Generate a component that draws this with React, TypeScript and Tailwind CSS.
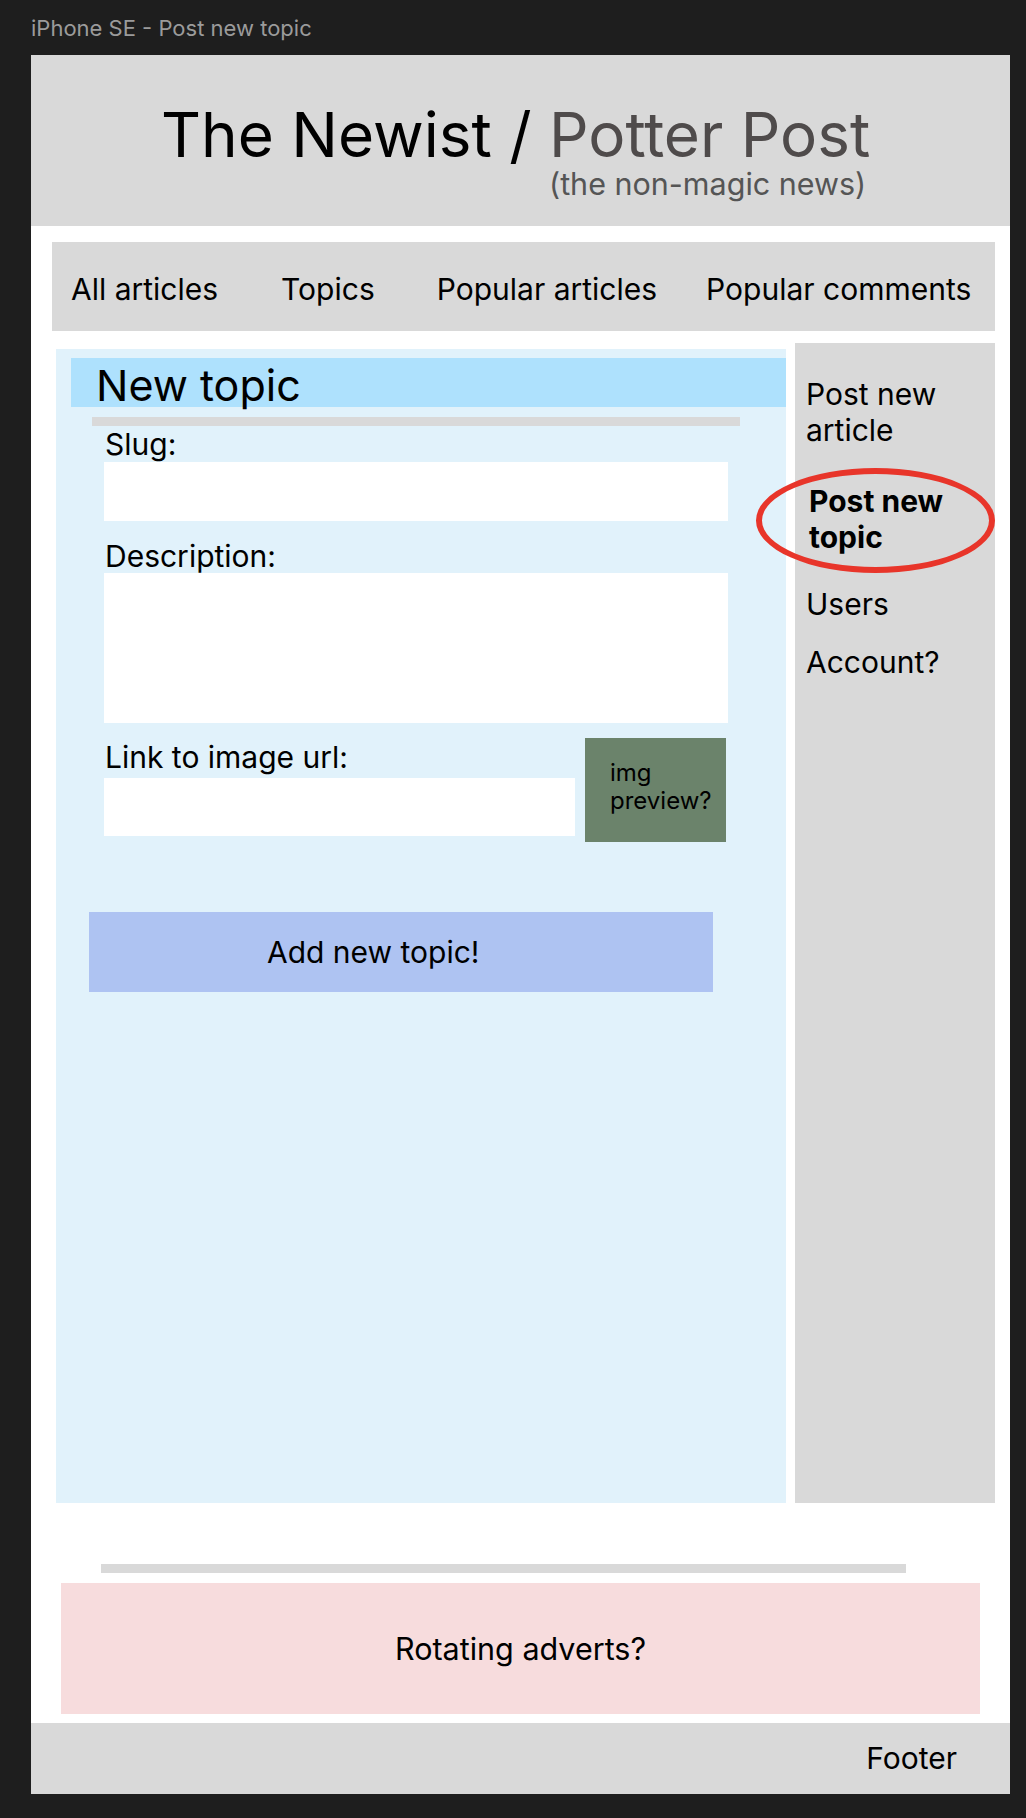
const navItems = [
  { label: "All articles", gap: "" },
  { label: "Topics", gap: "ml-[63px]" },
  { label: "Popular articles", gap: "ml-[62px]" },
  { label: "Popular comments", gap: "ml-[49px]" },
];

function Sidebar() {
  return (
    <aside className="relative w-[200px] bg-[#d9d9d9] pl-[11px] pt-[33px] text-[30px] leading-[36px] text-black">
      <div>
        Post new
        <br />
        article
      </div>
      <div className="mt-[35px] pl-[3px] font-bold">
        Post new
        <br />
        topic
      </div>
      <div className="mt-[31px]">Users</div>
      <div className="mt-[22px]">Account?</div>

      {/* red highlight ring */}
      <div className="absolute left-[-39px] top-[125px] h-[105px] w-[239px] rounded-[50%] border-[6px] border-[#e8352a]" />
    </aside>
  );
}

function TopicForm() {
  return (
    <section className="mt-[6px] w-[730px] bg-[#e1f2fb] pt-[9px]">
      {/* Title bar */}
      <div className="ml-[15px] flex h-[49px] items-center bg-[#aee1fd] pl-[25px] pt-[6px] text-[43px] leading-none text-black">
        New topic
      </div>
      <div className="ml-[36px] mt-[10px] h-[9px] w-[648px] bg-[#d9d9d9]" />

      <div className="pl-[48px] text-[30px] leading-none text-black">
        <div className="mt-[3px] pl-[1px]">Slug:</div>
        <div className="mt-[3px] h-[59px] w-[624px] bg-white" />

        <div className="mt-[20px] pl-[1px]">Description:</div>
        <div className="mt-[2px] h-[150px] w-[624px] bg-white" />

        <div className="mt-[15px] flex">
          <div className="w-[471px] pt-[4px]">
            <div className="pl-[1px]">Link to image url:</div>
            <div className="mt-[6px] h-[58px] bg-white" />
          </div>
          <div className="ml-[10px] h-[104px] w-[141px] bg-[#6b836b] pl-[25px] pt-[21px] text-[24px] leading-[28px]">
            img
            <br />
            preview?
          </div>
        </div>
      </div>

      <button className="ml-[33px] mt-[70px] flex h-[80px] w-[624px] items-center bg-[#aec3f2] pl-[178px] text-[30px] text-black">
        Add new topic!
      </button>
    </section>
  );
}

export default function App() {
  return (
    <div className="min-h-[1818px] bg-[#1e1e1e] pl-[31px] pt-[17px] font-['Inter',sans-serif]">
      <div className="text-[22px] leading-none text-[#9b9b9b]">iPhone SE - Post new topic</div>

      <div className="mt-[16px] flex h-[1739px] w-[979px] flex-col bg-white">
        {/* Header */}
        <header className="h-[171px] bg-[#d9d9d9] pl-[130px] pt-[49px]">
          <div className="inline-flex flex-col items-end">
            <h1 className="text-[62px] leading-none text-black">
              The Newist / <span className="text-[#4f4b4b]">Potter Post</span>
            </h1>
            <p className="mr-[4px] mt-[3px] text-[30.5px] leading-none text-[#555555]">(the non-magic news)</p>
          </div>
        </header>

        {/* Nav */}
        <nav className="ml-[21px] mt-[16px] flex h-[89px] w-[943px] items-center whitespace-nowrap bg-[#d9d9d9] px-[19px] pt-[5px] text-[30px] text-black">
          {navItems.map((item) => (
            <span key={item.label} className={item.gap}>
              {item.label}
            </span>
          ))}
        </nav>

        {/* Main */}
        <div className="ml-[25px] mt-[12px] flex h-[1160px] items-stretch">
          <TopicForm />
          <div className="ml-[9px] flex">
            <Sidebar />
          </div>
        </div>

        {/* Adverts */}
        <div className="ml-[70px] mt-[61px] h-[9px] w-[805px] bg-[#d9d9d9]" />
        <div className="ml-[30px] mt-[10px] flex h-[131px] w-[919px] items-center justify-center bg-[#f7dcdd] text-[30.5px] text-black">
          Rotating adverts?
        </div>

        {/* Footer */}
        <footer className="mt-auto flex h-[71px] items-center justify-end bg-[#d9d9d9] pr-[53px] text-[30px] text-black">
          Footer
        </footer>
      </div>
    </div>
  );
}
